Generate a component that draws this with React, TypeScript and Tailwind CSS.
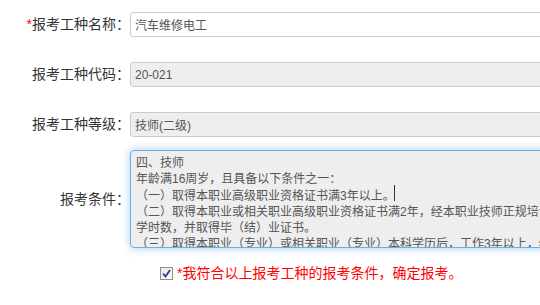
import React from 'react';

const font = "font-['Liberation_Sans','Noto_Sans_CJK_SC',sans-serif]";

const conditions = [
  '四、技师',
  '年龄满16周岁，且具备以下条件之一：',
  '（一）取得本职业高级职业资格证书满3年以上。',
  '（二）取得本职业或相关职业高级职业资格证书满2年，经本职业技师正规培训达规定标准',
  '学时数，并取得毕（结）业证书。',
  '（三）取得本职业（专业）或相关职业（专业）本科学历后，工作3年以上，经本职业技师正规培训达规定标准学时数，并取得毕（结）业证书。',
].join('\n');

function Field({
  label,
  value,
  required,
  disabled,
}: {
  label: string;
  value: string;
  required?: boolean;
  disabled?: boolean;
}) {
  return (
    <div className="flex items-center h-[25px]">
      <label className="w-[130px] shrink-0 text-right text-[14px] text-[#333]">
        {required && <span className="text-[#f00]">*</span>}
        {label}：
      </label>
      <input
        readOnly
        value={value}
        className={`w-[460px] shrink-0 h-[25px] px-[4px] text-[12px] text-[#555] border border-[#ccc] rounded-[3px] outline-none ${font} ${
          disabled ? 'bg-[#eee]' : 'bg-white'
        }`}
      />
    </div>
  );
}

export default function App() {
  return (
    <div className={`w-[540px] h-[305px] overflow-hidden bg-white pt-[12px] ${font}`}>
      <div className="flex flex-col gap-[25px]">
        <Field label="报考工种名称" value="汽车维修电工" required />
        <Field label="报考工种代码" value="20-021" disabled />
        <Field label="报考工种等级" value="技师(二级)" disabled />
      </div>

      <div className="flex items-center mt-[13px]">
        <label className="w-[130px] shrink-0 text-right text-[14px] text-[#333]">报考条件：</label>
        <div className="relative shrink-0">
          <textarea
            readOnly
            value={conditions}
            wrap="off"
            className={`block w-[640px] h-[98px] pl-[5px] pt-[4px] text-[12px] leading-[16.3px] text-[#555] bg-[#eee] border border-[#66afe9] rounded-[4px] shadow-[0_0_8px_rgba(102,175,233,0.6)] resize-none overflow-hidden outline-none ${font}`}
          />
          {/* text cursor */}
          <span className="absolute left-[264px] top-[35px] w-px h-[16px] bg-[#333]" />
        </div>
      </div>

      <div className="flex items-center mt-[18px] pl-[160px] h-[14px]">
        <span className="w-[13px] h-[13px] shrink-0 border border-[#8f8f8f] bg-gradient-to-br from-[#e8e8e8] to-white flex items-center justify-center">
          <svg width="9" height="9" viewBox="0 0 9 9">
            <path d="M1 4.5 L3.5 7.5 L8 1" fill="none" stroke="#2a3f8f" strokeWidth="1.8" />
          </svg>
        </span>
        <span className="ml-[4px] text-[14px] text-[#f00]">*我符合以上报考工种的报考条件，确定报考。</span>
      </div>
    </div>
  );
}
